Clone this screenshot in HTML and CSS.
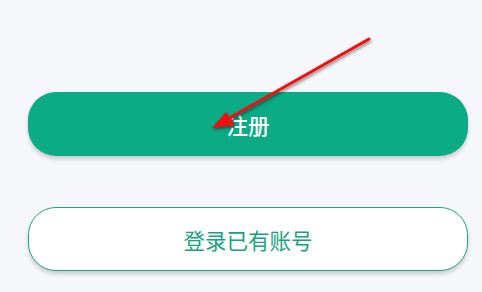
FILE: index.html
```html
<!DOCTYPE html>
<html lang="zh">
<head>
<meta charset="utf-8">
<link rel="stylesheet" href="styles.css">
</head>
<body>
<main class="page">
  <button class="btn btn-primary">注册</button>
  <button class="btn btn-outline">登录已有账号</button>
  <svg class="annot" width="482" height="292" viewBox="0 0 482 292">
    <defs>
      <filter id="sh" x="-20%" y="-20%" width="140%" height="140%">
        <feDropShadow dx="1" dy="2" stdDeviation="1.5" flood-color="#000" flood-opacity="0.45"/>
      </filter>
    </defs>
    <g filter="url(#sh)">
      <line x1="369" y1="39" x2="226" y2="120" stroke="#f50a0a" stroke-width="3" stroke-linecap="round"/>
      <polygon points="212,128 226,112 235,125" fill="#f50a0a"/>
    </g>
  </svg>
</main>
</body>
</html>
```
FILE: styles.css
```css
html, body {
  margin: 0;
  padding: 0;
  background: #f6f7fb;
}
.page {
  position: relative;
  width: 482px;
  height: 292px;
  box-sizing: border-box;
  padding: 92px 14px 0 28px;
  display: flex;
  flex-direction: column;
  gap: 51px;
  font-family: "Noto Sans CJK SC", "Noto Sans", sans-serif;
}
.btn {
  width: 440px;
  height: 64px;
  border-radius: 28px;
  font-family: inherit;
  font-size: 21.5px;
  display: flex;
  align-items: center;
  justify-content: center;
  padding: 0;
  cursor: pointer;
  box-sizing: border-box;
}
.btn-primary {
  background: #0aab85;
  color: #ffffff;
  border: none;
  font-weight: 500;
  box-shadow: 0 3px 4px rgba(0,0,0,0.18);
}
.btn-outline {
  background: #ffffff;
  color: #16a47e;
  border: 1px solid #1aa882;
  box-shadow: 0 3px 4px rgba(0,0,0,0.18);
}
.annot {
  position: absolute;
  left: 0;
  top: 0;
  pointer-events: none;
}
```
